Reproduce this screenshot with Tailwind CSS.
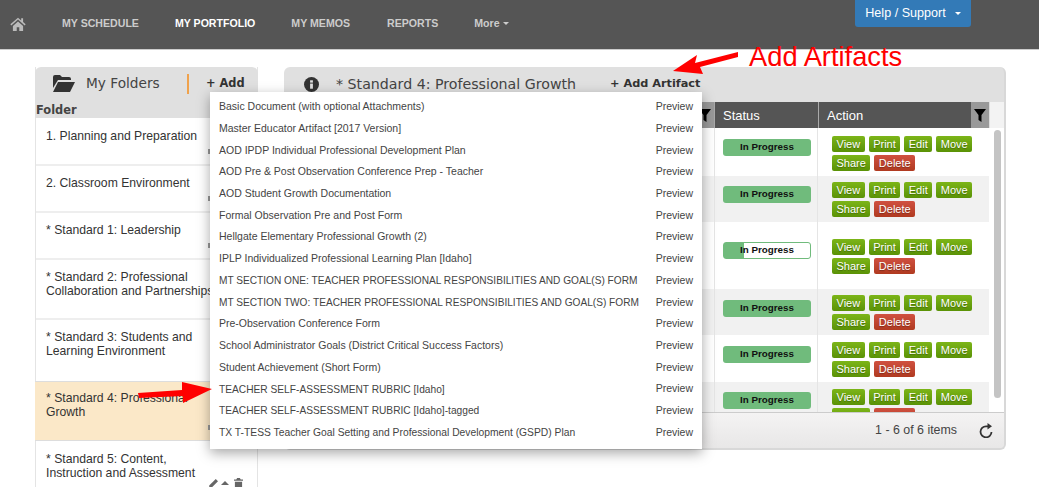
<!DOCTYPE html>
<html lang="en">
  <head>
    <meta charset="UTF-8" />
    <title>My Portfolio</title>
    <script src="https://cdn.jsdelivr.net/npm/@tailwindcss/browser@4"></script>
  </head>
  <body class="relative w-[1039px] h-[487px] overflow-hidden bg-white font-['Liberation_Sans',sans-serif] text-[#333]">
    <!-- top nav -->
    <nav class="h-[50px] bg-[#555] border-b border-[#ccc] flex items-start pl-[10px]">
      <svg class="mt-[17px] w-[16px] h-[14px] fill-[#bbb]" viewBox="0 0 24 22"><path d="M12 1 0 11.500l1.500 1.700L12 4l10.500 9.200 1.500-1.700-4-3.500V2h-3v3.400zM4 14v8h6v-6h4v6h6v-8l-8-7z"/></svg>
      <div class="flex mt-[17px] text-[10.600px] leading-[13px] font-bold text-[#ccc]">
        <a class="ml-[36px]">MY SCHEDULE</a>
        <a class="ml-[36px] text-white">MY PORTFOLIO</a>
        <a class="ml-[36px]">MY MEMOS</a>
        <a class="ml-[37px]">REPORTS</a>
        <a class="ml-[36px] flex items-center gap-[3px]">More <span class="border-x-[3px] border-t-[3px] border-x-transparent border-t-[#ccc]"></span></a>
      </div>
      <button class="ml-auto mr-[68px] w-[116px] h-[27px] bg-[#337ab7] rounded-b-[3px] text-white text-[12.600px] flex items-center justify-center gap-[9px]">Help / Support <span class="border-x-[3px] border-t-[3px] border-x-transparent border-t-white"></span></button>
    </nav>

    <main class="flex items-start pl-[35px] pt-[17px]">
      <!-- folders -->
      <section class="w-[223px] h-[420px] shrink-0 border-x border-[#e4e4e4]">
        <div class="h-[51px] bg-[#e0e0e0] rounded-t-[6px] -mx-px">
          <div class="flex items-center h-[33px] pl-[18px]">
            <svg class="w-[22px] h-[17px] fill-[#333]" viewBox="0 0 22 17"><path d="M0 2q0-2 2-2h5l2 2h7q2 0 2 2v1H5L0 13zM5 7h17l-5 10H0z"/></svg>
            <span class="ml-[11px] w-[101px] text-[13.700px] font-['DejaVu_Sans'] text-[#444]">My Folders</span>
            <span class="w-[2px] h-[20px] bg-[#f0a24c]"></span>
            <span class="ml-[17px] text-[11.400px] font-bold font-['DejaVu_Sans'] text-[#333]">+ Add</span>
          </div>
          <div class="text-[11.400px] leading-[14px] font-bold font-['DejaVu_Sans'] text-[#444] pl-px pt-[3px]">Folder</div>
        </div>
        <div class="text-[12.200px] leading-[14px]">
          <div class="relative h-[48px] border-b-2 border-[#eee] pl-[10px] pt-[11px]">1. Planning and Preparation<span class="absolute left-[172px] bottom-[10px] w-[2px] h-[5px] bg-[#999]"></span></div>
          <div class="relative h-[47px] border-b-2 border-[#eee] pl-[10px] pt-[10px]">2. Classroom Environment<span class="absolute left-[172px] bottom-[10px] w-[2px] h-[5px] bg-[#999]"></span></div>
          <div class="relative h-[47px] border-b-2 border-[#eee] pl-[10px] pt-[10px]">* Standard 1: Leadership<span class="absolute left-[172px] bottom-[10px] w-[2px] h-[5px] bg-[#999]"></span></div>
          <div class="h-[60px] border-b-2 border-[#eee] pl-[10px] pt-[10px]">* Standard 2: Professional<br />Collaboration and Partnerships</div>
          <div class="h-[61px] pl-[10px] pt-[10px]">* Standard 3: Students and<br />Learning Environment</div>
          <div class="relative h-[60px] bg-[#fbe8c8] border-y border-[#ddd] pl-[11px] pt-[9px] -mx-px">* Standard 4: Professional<br />Growth<span class="absolute left-[173px] bottom-[10px] w-[2px] h-[5px] bg-[#999]"></span></div>
          <div class="relative h-[50px] pl-[10px] pt-[11px]">* Standard 5: Content,<br />Instruction and Assessment
            <div class="absolute left-[173px] top-[37px] flex gap-[3px] items-center">
              <svg class="w-[9px] h-[9px] fill-[#666]" viewBox="0 0 10 10"><path d="M7.500 0 10 2.500 3 9.500 0 10l.5-3z"/></svg>
              <span class="border-x-[4px] border-b-[4px] border-x-transparent border-b-[#666]"></span>
              <svg class="ml-[2px] w-[9px] h-[10px] fill-[#666]" viewBox="0 0 10 11"><path d="M3.500 0h3l1 1.500H10V3H0V1.500h2.500zM1 4h8v7H1z"/></svg>
            </div>
          </div>
        </div>
      </section>

      <!-- artifacts -->
      <section class="ml-[26px] w-[722px] h-[383px] flex flex-col bg-[#e0e0e0] rounded-[6px] border-r-2 border-b-2 border-[#d8d8d8] overflow-hidden">
        <div class="h-[35px] shrink-0 flex items-center pl-[20px]">
          <svg class="w-[15px] h-[15px]" viewBox="0 0 16 16"><circle cx="8" cy="8" r="8" fill="#333"/><rect x="6.500" y="7" width="3" height="5.500" fill="#e0e0e0"/><rect x="6.500" y="3.500" width="3" height="2.500" fill="#e0e0e0"/></svg>
          <span class="ml-[17px] w-[274px] text-[14.200px] font-['DejaVu_Sans'] text-[#444]">* Standard 4: Professional Growth</span>
          <span class="text-[11.300px] font-bold font-['DejaVu_Sans'] text-[#333] border-b border-[#f0a24c]">+ Add Artifact</span>
        </div>
        <div class="flex-1 flex bg-white min-h-0">
          <div class="w-[705px] shrink-0 overflow-hidden flex flex-col">
            <div class="h-[26px] shrink-0 flex bg-[#555] text-white text-[13px] pt-px">
              <div class="w-[430px] shrink-0 bg-[#999] -mt-px flex justify-end items-center pr-[3px]"><svg class="w-[12px] h-[13px] fill-black" viewBox="0 0 12 13"><path d="M0 0h12L7.500 6v7l-3-2V6z"/></svg></div>
              <div class="w-[104px] shrink-0 pl-[8px] flex items-center border-l border-[#aaa] -mt-px pt-[2px]">Status</div>
              <div class="flex-1 pl-[8px] flex items-center border-l border-[#aaa] -mt-px pt-[2px]">Action<span class="ml-auto -mt-[2px] self-stretch w-[18px] bg-[#999] flex items-center justify-center"><svg class="w-[12px] h-[13px] fill-black" viewBox="0 0 12 13"><path d="M0 0h12L7.500 6v7l-3-2V6z"/></svg></span></div>
            </div>

            <div class="flex h-[48px] shrink-0">
              <div class="w-[430px] shrink-0"></div>
              <div class="w-[104px] shrink-0 border-x border-[#e5e5e5] pl-[8px] pt-[11px]"><div class="h-[17px] w-[88px] rounded-[3px] bg-[#70bb7c] text-[9.800px] font-bold text-[#111] flex items-center justify-center">In Progress</div></div>
              <div class="flex flex-wrap content-start gap-x-[4px] gap-y-[3px] pl-[14px] pt-[8px] w-[170px] text-[11px] text-white [text-shadow:0_1px_1px_rgba(0,0,0,0.3)]"><a class="h-[16px] leading-[16px] px-[4.500px] rounded-[2px] bg-gradient-to-b from-[#7cb518] to-[#5a9206]">View</a><a class="h-[16px] leading-[16px] px-[4.500px] rounded-[2px] bg-gradient-to-b from-[#7cb518] to-[#5a9206]">Print</a><a class="h-[16px] leading-[16px] px-[4.500px] rounded-[2px] bg-gradient-to-b from-[#7cb518] to-[#5a9206]">Edit</a><a class="h-[16px] leading-[16px] px-[4.500px] rounded-[2px] bg-gradient-to-b from-[#7cb518] to-[#5a9206]">Move</a><a class="h-[16px] leading-[16px] px-[4.500px] rounded-[2px] bg-gradient-to-b from-[#7cb518] to-[#5a9206]">Share</a><a class="h-[16px] leading-[16px] px-[4.500px] rounded-[2px] bg-gradient-to-b from-[#d05040] to-[#b03a20]">Delete</a></div>
            </div>
            <div class="flex h-[46px] shrink-0 bg-[#f1f1f1]">
              <div class="w-[430px] shrink-0"></div>
              <div class="w-[104px] shrink-0 border-x border-[#e5e5e5] pl-[8px] pt-[10px]"><div class="h-[17px] w-[88px] rounded-[3px] bg-[#70bb7c] text-[9.800px] font-bold text-[#111] flex items-center justify-center">In Progress</div></div>
              <div class="flex flex-wrap content-start gap-x-[4px] gap-y-[3px] pl-[14px] pt-[6px] w-[170px] text-[11px] text-white [text-shadow:0_1px_1px_rgba(0,0,0,0.3)]"><a class="h-[16px] leading-[16px] px-[4.500px] rounded-[2px] bg-gradient-to-b from-[#7cb518] to-[#5a9206]">View</a><a class="h-[16px] leading-[16px] px-[4.500px] rounded-[2px] bg-gradient-to-b from-[#7cb518] to-[#5a9206]">Print</a><a class="h-[16px] leading-[16px] px-[4.500px] rounded-[2px] bg-gradient-to-b from-[#7cb518] to-[#5a9206]">Edit</a><a class="h-[16px] leading-[16px] px-[4.500px] rounded-[2px] bg-gradient-to-b from-[#7cb518] to-[#5a9206]">Move</a><a class="h-[16px] leading-[16px] px-[4.500px] rounded-[2px] bg-gradient-to-b from-[#7cb518] to-[#5a9206]">Share</a><a class="h-[16px] leading-[16px] px-[4.500px] rounded-[2px] bg-gradient-to-b from-[#d05040] to-[#b03a20]">Delete</a></div>
            </div>
            <div class="flex h-[67px] shrink-0">
              <div class="w-[430px] shrink-0"></div>
              <div class="w-[104px] shrink-0 border-x border-[#e5e5e5] pl-[8px] pt-[20px]"><div class="relative h-[17px] w-[88px] rounded-[3px] border border-[#70bb7c] bg-white text-[9.800px] font-bold text-[#111] flex items-center justify-center"><span class="absolute left-0 top-0 bottom-0 w-[20px] bg-[#70bb7c]"></span><span class="relative">In Progress</span></div></div>
              <div class="flex flex-wrap content-start gap-x-[4px] gap-y-[3px] pl-[14px] pt-[17px] w-[170px] text-[11px] text-white [text-shadow:0_1px_1px_rgba(0,0,0,0.3)]"><a class="h-[16px] leading-[16px] px-[4.500px] rounded-[2px] bg-gradient-to-b from-[#7cb518] to-[#5a9206]">View</a><a class="h-[16px] leading-[16px] px-[4.500px] rounded-[2px] bg-gradient-to-b from-[#7cb518] to-[#5a9206]">Print</a><a class="h-[16px] leading-[16px] px-[4.500px] rounded-[2px] bg-gradient-to-b from-[#7cb518] to-[#5a9206]">Edit</a><a class="h-[16px] leading-[16px] px-[4.500px] rounded-[2px] bg-gradient-to-b from-[#7cb518] to-[#5a9206]">Move</a><a class="h-[16px] leading-[16px] px-[4.500px] rounded-[2px] bg-gradient-to-b from-[#7cb518] to-[#5a9206]">Share</a><a class="h-[16px] leading-[16px] px-[4.500px] rounded-[2px] bg-gradient-to-b from-[#d05040] to-[#b03a20]">Delete</a></div>
            </div>
            <div class="flex h-[46px] shrink-0 bg-[#f1f1f1]">
              <div class="w-[430px] shrink-0"></div>
              <div class="w-[104px] shrink-0 border-x border-[#e5e5e5] pl-[8px] pt-[11px]"><div class="h-[17px] w-[88px] rounded-[3px] bg-[#70bb7c] text-[9.800px] font-bold text-[#111] flex items-center justify-center">In Progress</div></div>
              <div class="flex flex-wrap content-start gap-x-[4px] gap-y-[3px] pl-[14px] pt-[6px] w-[170px] text-[11px] text-white [text-shadow:0_1px_1px_rgba(0,0,0,0.3)]"><a class="h-[16px] leading-[16px] px-[4.500px] rounded-[2px] bg-gradient-to-b from-[#7cb518] to-[#5a9206]">View</a><a class="h-[16px] leading-[16px] px-[4.500px] rounded-[2px] bg-gradient-to-b from-[#7cb518] to-[#5a9206]">Print</a><a class="h-[16px] leading-[16px] px-[4.500px] rounded-[2px] bg-gradient-to-b from-[#7cb518] to-[#5a9206]">Edit</a><a class="h-[16px] leading-[16px] px-[4.500px] rounded-[2px] bg-gradient-to-b from-[#7cb518] to-[#5a9206]">Move</a><a class="h-[16px] leading-[16px] px-[4.500px] rounded-[2px] bg-gradient-to-b from-[#7cb518] to-[#5a9206]">Share</a><a class="h-[16px] leading-[16px] px-[4.500px] rounded-[2px] bg-gradient-to-b from-[#d05040] to-[#b03a20]">Delete</a></div>
            </div>
            <div class="flex h-[47px] shrink-0">
              <div class="w-[430px] shrink-0"></div>
              <div class="w-[104px] shrink-0 border-x border-[#e5e5e5] pl-[8px] pt-[11px]"><div class="h-[17px] w-[88px] rounded-[3px] bg-[#70bb7c] text-[9.800px] font-bold text-[#111] flex items-center justify-center">In Progress</div></div>
              <div class="flex flex-wrap content-start gap-x-[4px] gap-y-[3px] pl-[14px] pt-[7px] w-[170px] text-[11px] text-white [text-shadow:0_1px_1px_rgba(0,0,0,0.3)]"><a class="h-[16px] leading-[16px] px-[4.500px] rounded-[2px] bg-gradient-to-b from-[#7cb518] to-[#5a9206]">View</a><a class="h-[16px] leading-[16px] px-[4.500px] rounded-[2px] bg-gradient-to-b from-[#7cb518] to-[#5a9206]">Print</a><a class="h-[16px] leading-[16px] px-[4.500px] rounded-[2px] bg-gradient-to-b from-[#7cb518] to-[#5a9206]">Edit</a><a class="h-[16px] leading-[16px] px-[4.500px] rounded-[2px] bg-gradient-to-b from-[#7cb518] to-[#5a9206]">Move</a><a class="h-[16px] leading-[16px] px-[4.500px] rounded-[2px] bg-gradient-to-b from-[#7cb518] to-[#5a9206]">Share</a><a class="h-[16px] leading-[16px] px-[4.500px] rounded-[2px] bg-gradient-to-b from-[#d05040] to-[#b03a20]">Delete</a></div>
            </div>
            <div class="flex h-[47px] shrink-0 bg-[#f1f1f1]">
              <div class="w-[430px] shrink-0"></div>
              <div class="w-[104px] shrink-0 border-x border-[#e5e5e5] pl-[8px] pt-[10px]"><div class="h-[17px] w-[88px] rounded-[3px] bg-[#70bb7c] text-[9.800px] font-bold text-[#111] flex items-center justify-center">In Progress</div></div>
              <div class="flex flex-wrap content-start gap-x-[4px] gap-y-[3px] pl-[14px] pt-[7px] w-[170px] text-[11px] text-white [text-shadow:0_1px_1px_rgba(0,0,0,0.3)]"><a class="h-[16px] leading-[16px] px-[4.500px] rounded-[2px] bg-gradient-to-b from-[#7cb518] to-[#5a9206]">View</a><a class="h-[16px] leading-[16px] px-[4.500px] rounded-[2px] bg-gradient-to-b from-[#7cb518] to-[#5a9206]">Print</a><a class="h-[16px] leading-[16px] px-[4.500px] rounded-[2px] bg-gradient-to-b from-[#7cb518] to-[#5a9206]">Edit</a><a class="h-[16px] leading-[16px] px-[4.500px] rounded-[2px] bg-gradient-to-b from-[#7cb518] to-[#5a9206]">Move</a><a class="h-[16px] leading-[16px] px-[4.500px] rounded-[2px] bg-gradient-to-b from-[#7cb518] to-[#5a9206]">Share</a><a class="h-[16px] leading-[16px] px-[4.500px] rounded-[2px] bg-gradient-to-b from-[#d05040] to-[#b03a20]">Delete</a></div>
            </div>
          </div>
          <!-- scrollbar -->
          <div class="flex-1 bg-white">
            <div class="h-[26px] bg-[#f3f3f3] border-l border-[#ddd]"></div>
            <div class="mt-[2px] ml-[5px] w-[7px] h-[268px] rounded bg-[#c4c4c4]"></div>
          </div>
        </div>
        <div class="h-[36px] shrink-0 bg-gradient-to-b from-[#f4f3f3] to-[#e8e7e7] border-t border-[#ccc] flex items-center justify-end text-[12.400px] text-[#444] pr-[11px]">
          1 - 6 of 6 items
          <svg class="ml-[22px] w-[14px] h-[15px]" viewBox="0 0 14 15" fill="none" stroke="#333" stroke-width="1.800"><path d="M12.500 9A5.500 5.500 0 1 1 7 3.300h2"/><path d="M8.500 0 13 3.300 8.500 6.600z" fill="#333" stroke="none"/></svg>
        </div>
      </section>
    </main>

    <!-- add artifact menu -->
    <div class="absolute left-[210px] top-[92px] w-[492px] h-[357px] bg-white shadow-[0_4px_12px_rgba(0,0,0,0.35)] pl-[9px] pr-[9px] pt-[4.400px] text-[10.500px] text-[#444]">
      <div class="flex justify-between h-[21.700px] items-center"><span>Basic Document (with optional Attachments)</span><span>Preview</span></div>
      <div class="flex justify-between h-[21.700px] items-center"><span>Master Educator Artifact [2017 Version]</span><span>Preview</span></div>
      <div class="flex justify-between h-[21.700px] items-center"><span>AOD IPDP Individual Professional Development Plan</span><span>Preview</span></div>
      <div class="flex justify-between h-[21.700px] items-center"><span>AOD Pre &amp; Post Observation Conference Prep - Teacher</span><span>Preview</span></div>
      <div class="flex justify-between h-[21.700px] items-center"><span>AOD Student Growth Documentation</span><span>Preview</span></div>
      <div class="flex justify-between h-[21.700px] items-center"><span>Formal Observation Pre and Post Form</span><span>Preview</span></div>
      <div class="flex justify-between h-[21.700px] items-center"><span>Hellgate Elementary Professional Growth (2)</span><span>Preview</span></div>
      <div class="flex justify-between h-[21.700px] items-center"><span>IPLP Individualized Professional Learning Plan [Idaho]</span><span>Preview</span></div>
      <div class="flex justify-between h-[21.700px] items-center"><span class="text-[10.150px]">MT SECTION ONE: TEACHER PROFESSIONAL RESPONSIBILITIES AND GOAL(S) FORM</span><span>Preview</span></div>
      <div class="flex justify-between h-[21.700px] items-center"><span class="text-[10.150px]">MT SECTION TWO: TEACHER PROFESSIONAL RESPONSIBILITIES AND GOAL(S) FORM</span><span>Preview</span></div>
      <div class="flex justify-between h-[21.700px] items-center"><span>Pre-Observation Conference Form</span><span>Preview</span></div>
      <div class="flex justify-between h-[21.700px] items-center"><span>School Administrator Goals (District Critical Success Factors)</span><span>Preview</span></div>
      <div class="flex justify-between h-[21.700px] items-center"><span>Student Achievement (Short Form)</span><span>Preview</span></div>
      <div class="flex justify-between h-[21.700px] items-center"><span class="text-[10.200px]">TEACHER SELF-ASSESSMENT RUBRIC [Idaho]</span><span>Preview</span></div>
      <div class="flex justify-between h-[21.700px] items-center"><span class="text-[10.200px]">TEACHER SELF-ASSESSMENT RUBRIC [Idaho]-tagged</span><span>Preview</span></div>
      <div class="flex justify-between h-[21.700px] items-center"><span class="text-[10.300px]">TX T-TESS Teacher Goal Setting and Professional Development (GSPD) Plan</span><span>Preview</span></div>
    </div>

    <!-- annotations -->
    <span class="absolute left-[749px] top-[41px] text-[27.300px] leading-[32px] text-[#f00]">Add Artifacts</span>
    <svg class="absolute left-0 top-0 pointer-events-none" width="1039" height="487" fill="#f00"><path d="M738 52 695 63 697 55 673 71 703 74 700 67 738 57Z"/><path d="M138 393 182 390 182 382 212 389 183 403 183 396 139 398Z"/></svg>
  </body>
</html>
